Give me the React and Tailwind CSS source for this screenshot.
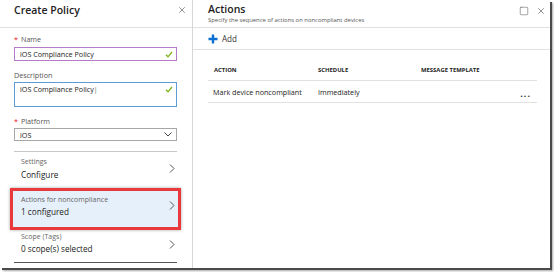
import { X, Square } from 'lucide-react'

function Chevron() {
  return (
    <svg width="6" height="9" viewBox="0 0 6 9" className="shrink-0">
      <path d="M1 0.5 L5 4.5 L1 8.5" fill="none" stroke="#555" strokeWidth="1" />
    </svg>
  )
}

function Check() {
  return (
    <svg width="8" height="7" viewBox="0 0 8 7" className="shrink-0">
      <path d="M1 3.8 L3 5.8 L7 1" fill="none" stroke="#7bb31a" strokeWidth="1.3" />
    </svg>
  )
}

function Label({ required, children }) {
  return (
    <div className="flex items-center leading-[10px] text-[7.2px] text-[#555]">
      {required ? <span className="mr-[3px] text-[#e81123]">*</span> : null}
      {children}
    </div>
  )
}

function NavItem({ label, value, active }) {
  return (
    <div
      className={
        active
          ? '-mx-[4px] flex h-[42px] items-start justify-between border-[3px] border-[#e8393c] bg-[#e6f0fb] pt-[4px] pr-[3px] pl-[8px] shadow-[0_0_3px_rgba(0,0,0,0.35)]'
          : 'flex h-[36px] items-start justify-between pt-[5px] pr-[2px] pl-[7px]'
      }
    >
      <div>
        <div className="text-[7px] leading-[10px] text-[#666]">{label}</div>
        <div className={active ? 'mt-[1px] text-[8.2px] leading-[12px] text-[#222]' : 'mt-[2px] text-[8.2px] leading-[12px] text-[#222]'}>
          {value}
        </div>
      </div>
      <div className={active ? 'pt-[6px]' : 'pt-[7px]'}>
        <Chevron />
      </div>
    </div>
  )
}

export default function App() {
  return (
    <div className="h-[272px] w-[554px] bg-white font-['Segoe_UI','Open_Sans',sans-serif] text-[#333]">
      <div className="flex h-[268px] w-[550px] bg-white shadow-[2px_2px_0_#4a4a4a,3px_3px_2px_rgba(0,0,0,0.35)]">
        {/* left blade */}
        <div className="flex w-[193px] flex-col border-r border-[#d6d6d6]">
          <div className="flex h-[28px] items-start justify-between border-b border-[#e1e1e1] pr-[5px] pl-[14px]">
            <span className="pt-[3px] text-[10.5px] leading-[14px] font-semibold text-[#222]">Create Policy</span>
            <X className="mt-[5px] h-[10px] w-[10px] text-[#555]" strokeWidth={1.5} />
          </div>

          <div className="pr-[15px] pl-[14px]">
            <div className="mt-[6px]">
              <Label required>Name</Label>
            </div>
            <div className="mt-[3px] flex h-[14px] items-center justify-between border border-[#b47cc8] pr-[3px] pl-[5px]">
              <span className="text-[7.2px] leading-[10px] text-[#222]">iOS Compliance Policy</span>
              <Check />
            </div>

            <div className="mt-[9px]">
              <Label>Description</Label>
            </div>
            <div className="mt-[2px] flex h-[25px] items-start justify-between border border-[#5e9ad6] pt-[1px] pr-[3px] pl-[5px]">
              <span className="text-[7.2px] leading-[10px] text-[#222]">
                iOS Compliance Policy<span className="font-light text-[#000]">|</span>
              </span>
              <div className="pt-[2px]">
                <Check />
              </div>
            </div>

            <div className="mt-[9px]">
              <Label required>Platform</Label>
            </div>
            <div className="mt-[2px] flex h-[13px] items-center justify-between border border-[#a6a6a6] pr-[4px] pl-[5px]">
              <span className="text-[7.2px] leading-[10px] text-[#222]">iOS</span>
              <svg width="8" height="5" viewBox="0 0 8 5">
                <path d="M0.5 0.5 L4 4 L7.5 0.5" fill="none" stroke="#444" strokeWidth="1" />
              </svg>
            </div>

            <div className="mt-[10px] border-t border-[#c8c8c8]" />
            <NavItem label="Settings" value="Configure" />
            <NavItem label="Actions for noncompliance" value="1 configured" active />
            <div className="flex h-[32px] items-start justify-between pt-[2px] pr-[2px] pl-[7px]">
              <div>
                <div className="text-[7px] leading-[10px] text-[#666]">Scope (Tags)</div>
                <div className="mt-[1px] text-[8.2px] leading-[12px] text-[#222]">0 scope(s) selected</div>
              </div>
              <div className="pt-[8px]">
                <Chevron />
              </div>
            </div>
            <div className="border-t border-[#555]" />
          </div>
        </div>

        {/* right blade */}
        <div className="flex min-w-0 flex-1 flex-col">
          <div className="flex h-[28px] items-start justify-between border-b border-[#e1e1e1] pl-[15px]">
            <div>
              <div className="pt-[3px] text-[10.5px] leading-[13px] font-semibold text-[#222]">Actions</div>
              <div className="mt-[1px] text-[5.9px] leading-[7px] text-[#555]">
                Specify the sequence of actions on noncompliant devices
              </div>
            </div>
            <div className="flex items-center gap-[7px] pt-[6px] pr-[4px]">
              <Square className="h-[10px] w-[10px] text-[#555]" strokeWidth={1.3} />
              <X className="h-[10px] w-[10px] text-[#555]" strokeWidth={1.5} />
            </div>
          </div>

          <div className="flex h-[22px] items-center gap-[4px] border-b border-[#e1e1e1] pl-[15px]">
            <svg width="10" height="10" viewBox="0 0 10 10">
              <path d="M5 0.5 V9.5 M0.5 5 H9.5" stroke="#0a6fd0" strokeWidth="2.4" />
            </svg>
            <span className="text-[8.1px] leading-[10px] text-[#333]">Add</span>
          </div>

          <div className="mr-[13px] ml-[15px]">
            <div className="grid h-[31px] grid-cols-[105px_103px_1fr] items-end border-b border-[#e1e1e1] pb-[6px] text-[5.9px] leading-[8px] font-bold text-[#222]">
              <div className="pl-[6px]">ACTION</div>
              <div className="pl-[5px]">SCHEDULE</div>
              <div className="pl-[5px]">MESSAGE TEMPLATE</div>
            </div>
            <div className="grid h-[22px] grid-cols-[105px_103px_1fr] items-center border-b border-[#e1e1e1] pt-[1px] text-[7.2px] leading-[10px] text-[#222]">
              <div className="pl-[5px]">Mark device noncompliant</div>
              <div className="pl-[5px]">Immediately</div>
              <div className="flex justify-end pt-[4px] pr-[6px] text-[9px] leading-[10px] font-bold tracking-[1px] text-[#333]">
                ...
              </div>
            </div>
          </div>
        </div>
      </div>
    </div>
  )
}
